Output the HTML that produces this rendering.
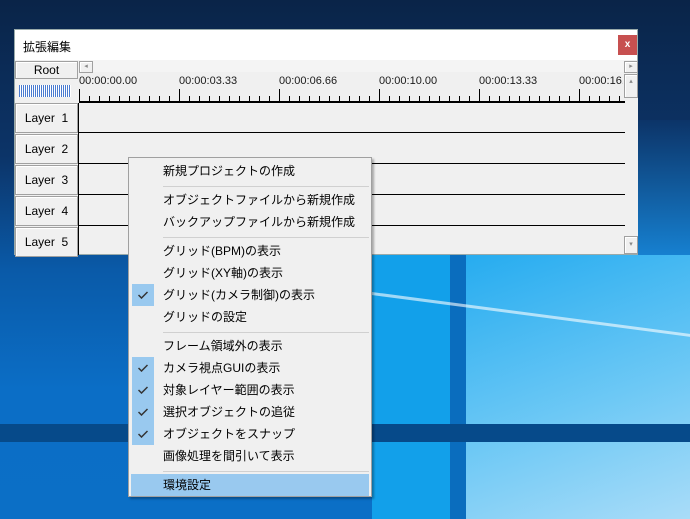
<!DOCTYPE html><html><head><meta charset="utf-8"><style>
*{margin:0;padding:0;box-sizing:border-box}
body{width:690px;height:519px;overflow:hidden;position:relative;font-family:"Liberation Sans","Noto Sans CJK JP",sans-serif;font-size:12px;color:#000;
background:linear-gradient(180deg,#0a2448 0%,#0c3468 30%,#0a5aa8 52%,#0b6ec6 75%,#0b6fc6 100%)}
.abs{position:absolute}
.win{left:14px;top:29px;width:624px;height:226px;background:#f0f0f0;border:1px solid #9aa}
.title{left:0;top:0;width:622px;height:30px;background:#fff}
.btn{background:#f0f0f0;border:1px solid #a0a0a0;box-shadow:inset 1px 1px #fff;text-align:center}
.lay{left:0;width:63px;height:30px;line-height:29px;font-size:12px}
.line{left:64px;width:546px;height:2px;background:#000}
.menu{left:128px;top:157px;width:244px;height:340px;background:#f0f0f0;border:1px solid #a0a0a0;box-shadow:2px 2px 2px rgba(0,0,0,.3)}
.it{left:34px;font-size:12px;height:22px;line-height:22px}
.sep{left:34px;width:206px;height:1px;background:#d0d0d0}
.ck{left:3px;width:22px;height:22px;background:#99c9ef}
.ck svg{position:absolute;left:6px;top:7px}
.ts{font-size:11px;color:#1a1a1a}
</style></head><body>
<!-- desktop -->
<div class="abs" style="left:372px;top:255px;width:318px;height:264px;background:linear-gradient(160deg,#1aa7ef,#6cc8f5 60%,#a9dcf8)"></div>
<div class="abs" style="left:372px;top:255px;width:80px;height:264px;background:#12a0ea"></div>
<div class="abs" style="left:450px;top:255px;width:16px;height:264px;background:#0a6dbe"></div>
<div class="abs" style="left:0;top:424px;width:690px;height:18px;background:#064a8a"></div>
<div class="abs" style="left:372px;top:292px;width:330px;height:3px;background:rgba(255,255,255,.6);transform-origin:0 0;transform:rotate(7.5deg)"></div>
<div class="abs" style="left:638px;top:120px;width:52px;height:135px;background:linear-gradient(180deg,#0c3468,#1680d0)"></div>

<div class="abs win">
 <div class="abs title"><span class="abs" style="left:8px;top:8px;font-size:12px">拡張編集</span>
  <div class="abs" style="left:603px;top:5px;width:19px;height:20px;background:#c75050;color:#fff;font-size:10px;font-weight:bold;text-align:center;line-height:20px">x</div></div>
 <div class="abs btn" style="left:0;top:31px;width:63px;height:18px;line-height:16px">Root</div>
 <div class="abs" style="left:4px;top:55px;width:52px;height:12px;background:repeating-linear-gradient(90deg,#4a7bd0 0 1px,#fff 1px 2px)"></div>
 <div class="abs" style="left:64px;top:30px;width:546px;height:12px;background:#f4f4f4"></div>
 <div class="abs btn" style="left:64px;top:31px;width:14px;height:12px;font-size:7px;line-height:10px;color:#888">◂</div>
 <div class="abs btn" style="left:609px;top:31px;width:14px;height:12px;font-size:7px;line-height:10px;color:#888">▸</div>
 <div class="abs btn" style="left:609px;top:44px;width:14px;height:24px;font-size:7px;line-height:14px;color:#888">▴</div>
 <div class="abs" style="left:610px;top:68px;width:13px;height:140px;background:#f0f0f0"></div>
 <div class="abs btn" style="left:609px;top:206px;width:14px;height:18px;font-size:7px;line-height:16px;color:#888">▾</div>
 <div class="abs ts" style="left:64px;top:45px">00:00:00.00</div>
 <div class="abs ts" style="left:164px;top:45px">00:00:03.33</div>
 <div class="abs ts" style="left:264px;top:45px">00:00:06.66</div>
 <div class="abs ts" style="left:364px;top:45px">00:00:10.00</div>
 <div class="abs ts" style="left:464px;top:45px">00:00:13.33</div>
 <div class="abs ts" style="left:564px;top:45px;width:44px;overflow:hidden;white-space:nowrap">00:00:16.66</div>
 <div class="abs" style="left:64px;top:66px;width:546px;height:5px;background:repeating-linear-gradient(90deg,#000 0 1px,transparent 1px 10px)"></div>
 <div class="abs" style="left:64px;top:59px;width:546px;height:12px;background:repeating-linear-gradient(90deg,#000 0 1px,transparent 1px 100px)"></div>
 <div class="abs" style="left:64px;top:71px;width:546px;height:2px;background:#000"></div>
 <div class="abs" style="left:63px;top:73px;width:1px;height:152px;background:#000"></div>
 <div class="abs btn lay" style="top:73px">Layer&nbsp; 1</div>
 <div class="abs btn lay" style="top:104px">Layer&nbsp; 2</div>
 <div class="abs btn lay" style="top:135px">Layer&nbsp; 3</div>
 <div class="abs btn lay" style="top:166px">Layer&nbsp; 4</div>
 <div class="abs btn lay" style="top:197px">Layer&nbsp; 5</div>
 <div class="abs line" style="top:102px;height:1px"></div>
 <div class="abs line" style="top:133px;height:1px"></div>
 <div class="abs line" style="top:164px;height:1px"></div>
 <div class="abs line" style="top:195px;height:1px"></div>
</div>

<div class="abs menu">
 <div class="abs it" style="top:2px">新規プロジェクトの作成</div>
 <div class="abs sep" style="top:28px"></div>
 <div class="abs it" style="top:31px">オブジェクトファイルから新規作成</div>
 <div class="abs it" style="top:53px">バックアップファイルから新規作成</div>
 <div class="abs sep" style="top:79px"></div>
 <div class="abs it" style="top:82px">グリッド(BPM)の表示</div>
 <div class="abs it" style="top:104px">グリッド(XY軸)の表示</div>
 <div class="abs ck" style="top:126px"><svg width="10" height="8"><path d="M0.5 4 L3.5 7 L9.5 1" stroke="#333" stroke-width="1.5" fill="none"/></svg></div>
 <div class="abs it" style="top:126px">グリッド(カメラ制御)の表示</div>
 <div class="abs it" style="top:148px">グリッドの設定</div>
 <div class="abs sep" style="top:174px"></div>
 <div class="abs it" style="top:177px">フレーム領域外の表示</div>
 <div class="abs ck" style="top:199px;height:88px"></div>
 <div class="abs ck" style="top:199px;background:none"><svg width="10" height="8"><path d="M0.5 4 L3.5 7 L9.5 1" stroke="#333" stroke-width="1.5" fill="none"/></svg></div>
 <div class="abs ck" style="top:221px;background:none"><svg width="10" height="8"><path d="M0.5 4 L3.5 7 L9.5 1" stroke="#333" stroke-width="1.5" fill="none"/></svg></div>
 <div class="abs ck" style="top:243px;background:none"><svg width="10" height="8"><path d="M0.5 4 L3.5 7 L9.5 1" stroke="#333" stroke-width="1.5" fill="none"/></svg></div>
 <div class="abs ck" style="top:265px;background:none"><svg width="10" height="8"><path d="M0.5 4 L3.5 7 L9.5 1" stroke="#333" stroke-width="1.5" fill="none"/></svg></div>
 <div class="abs it" style="top:199px">カメラ視点GUIの表示</div>
 <div class="abs it" style="top:221px">対象レイヤー範囲の表示</div>
 <div class="abs it" style="top:243px">選択オブジェクトの追従</div>
 <div class="abs it" style="top:265px">オブジェクトをスナップ</div>
 <div class="abs it" style="top:287px">画像処理を間引いて表示</div>
 <div class="abs sep" style="top:313px"></div>
 <div class="abs" style="left:2px;top:316px;width:238px;height:22px;background:#99c9ef"></div>
 <div class="abs it" style="top:316px">環境設定</div>
</div>
</body></html>
